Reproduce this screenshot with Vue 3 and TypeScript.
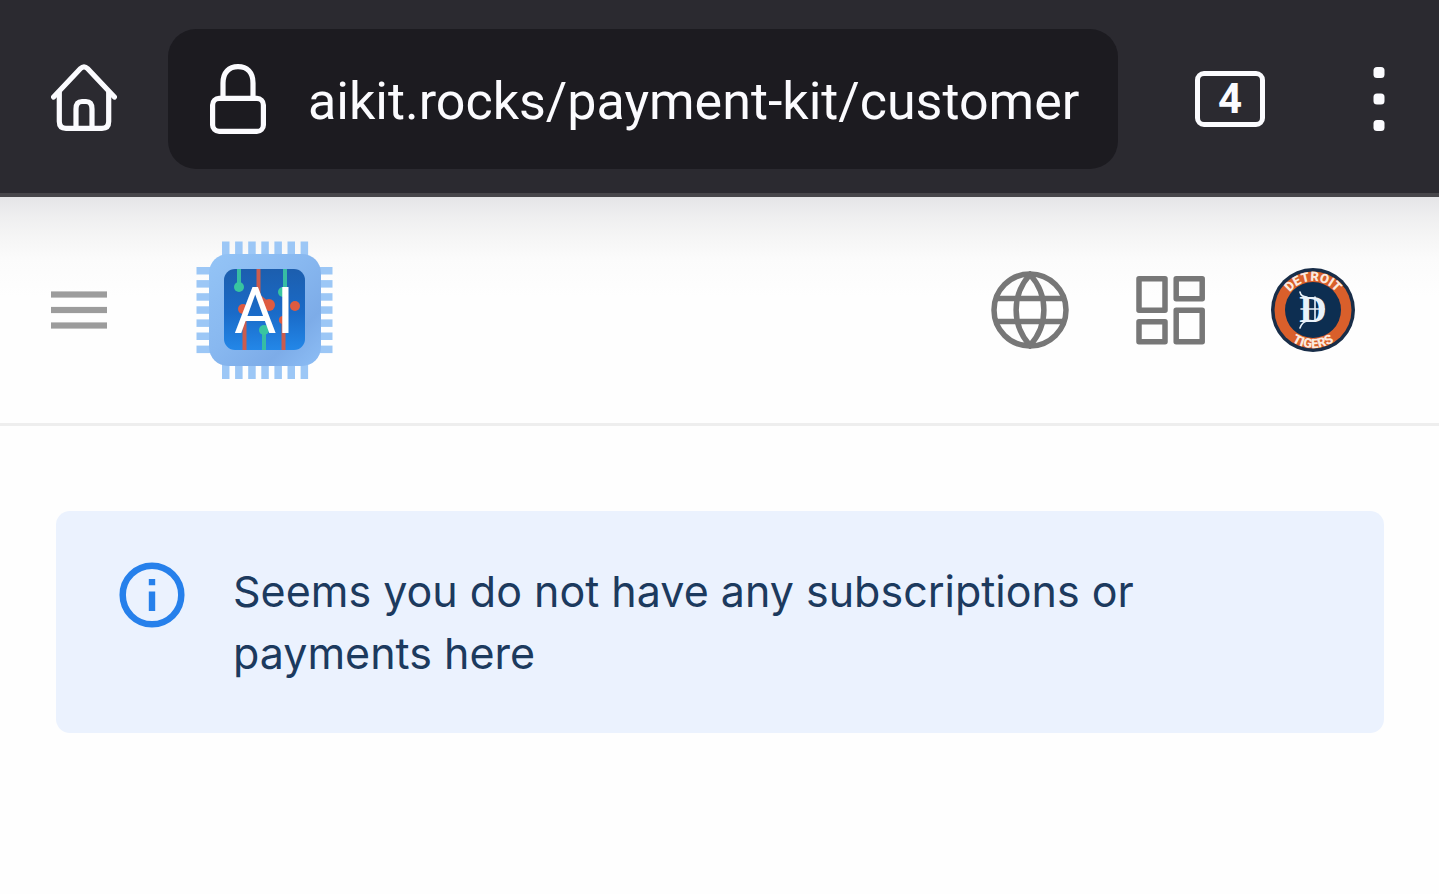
<script setup lang="ts">
import { ref } from 'vue'

const address = ref('aikit.rocks/payment-kit/customer')
const openTabs = ref(4)
const message = 'Seems you do not have any subscriptions or payments here'
const pins: number[] = [0, 1, 2, 3, 4, 5, 6]
</script>

<template>
  <div class="screen">
    <div class="browser-bar">
      <button class="icon-button" type="button" aria-label="Home">
        <svg width="66" height="70" viewBox="0 0 66 70" fill="none" stroke="currentColor" stroke-width="5.200" stroke-linecap="round" stroke-linejoin="round">
          <path d="M2.600 33 L29.5 4.500 Q33 1 36.500 4.500 L63.400 33" />
          <path d="M8.300 28 V57.500 Q8.300 64.300 15 64.300 H51 Q57.700 64.300 57.700 57.500 V28" />
          <path d="M25 63 V45 Q25 37.500 31 37.500 H35 Q41 37.500 41 45 V63" />
        </svg>
      </button>
      <label class="address">
        <svg width="56" height="70" viewBox="0 0 56 70" fill="none" stroke="currentColor" stroke-width="5.200">
          <rect x="2.600" y="34.400" width="50.800" height="33" rx="6.500" />
          <path d="M13 34 V19 C13 8.500 19 2.600 28 2.600 S43 8.500 43 19 V34" />
        </svg>
        <input v-model="address" class="address-input" type="text" aria-label="Address" />
      </label>
      <button class="tabs" type="button" aria-label="Open tabs">{{ openTabs }}</button>
      <button class="icon-button" type="button" aria-label="Browser menu">
        <svg width="12" height="64" viewBox="0 0 12 64" fill="currentColor">
          <rect x="0.500" y="0" width="11" height="11" rx="3.500" />
          <rect x="0.500" y="26.500" width="11" height="11" rx="3.500" />
          <rect x="0.500" y="53" width="11" height="11" rx="3.500" />
        </svg>
      </button>
    </div>

    <header class="site-header">
      <button class="icon-button menu" type="button" aria-label="Menu">
        <svg width="56" height="38" viewBox="0 0 56 38" fill="currentColor">
          <rect y="0.400" width="56" height="6.200" />
          <rect y="15.900" width="56" height="6.200" />
          <rect y="31.400" width="56" height="6.200" />
        </svg>
      </button>
      <a class="logo" href="#" aria-label="AI Kit">
        <svg width="138" height="138" viewBox="0 0 138 138">
          <defs>
            <linearGradient id="chip" x1="0" y1="0" x2="1" y2="1">
              <stop offset="0" stop-color="#94c4f6" />
              <stop offset="0.450" stop-color="#88b8f0" />
              <stop offset="0.750" stop-color="#7dace8" />
              <stop offset="1" stop-color="#8dbef6" />
            </linearGradient>
            <linearGradient id="core" x1="0" y1="0" x2="0" y2="1">
              <stop offset="0" stop-color="#1c5eae" />
              <stop offset="0.550" stop-color="#1a6bc8" />
              <stop offset="1" stop-color="#2387e8" />
            </linearGradient>
          </defs>
          <g fill="#9cc7f6">
            <template v-for="pin in pins" :key="pin">
              <rect :x="26 + pin * 13.1" y="0.500" width="7.500" height="16" />
              <rect :x="26 + pin * 13.1" y="122" width="7.500" height="16" />
              <rect x="0.500" :y="26 + pin * 13.1" width="16" height="7.500" />
              <rect x="120.500" :y="26 + pin * 13.1" width="16" height="7.500" />
            </template>
          </g>
          <rect x="13" y="13" width="112" height="112" rx="19" fill="url(#chip)" />
          <rect x="28" y="28" width="81" height="81" rx="11" fill="url(#core)" />
          <g fill="none" stroke-width="4">
            <path d="M43 28 V44 M89 28 V52 M68 90 V109" stroke="#37bda3" />
            <path d="M62.500 28 V55 L74 64 M48.500 67 V109 M87.500 77 V109" stroke="#cc5c4d" />
          </g>
          <g fill="#38c5a0">
            <circle cx="43" cy="46" r="5" />
            <circle cx="87" cy="51" r="5" />
            <circle cx="68" cy="89" r="5" />
          </g>
          <g fill="#df5b40">
            <circle cx="47" cy="68" r="5" />
            <circle cx="73" cy="64" r="6" />
            <circle cx="99" cy="65" r="5" />
            <circle cx="87" cy="79" r="4" />
          </g>
          <text class="logo-text" x="38" y="92">AI</text>
        </svg>
      </a>
      <nav class="actions" aria-label="Account">
        <button class="icon-button" type="button" aria-label="Language">
          <svg width="78" height="78" viewBox="0 0 78 78" fill="none" stroke="currentColor" stroke-width="5.500">
            <circle cx="39" cy="39" r="36" />
            <path d="M6 27.500 H72 M6 50.500 H72" />
            <path d="M39 3.500 C20.500 24 20.500 54 39 74.500 C57.500 54 57.500 24 39 3.500 Z" />
          </svg>
        </button>
        <button class="icon-button" type="button" aria-label="Apps">
          <svg width="70" height="70" viewBox="0 0 70 70" fill="none" stroke="currentColor" stroke-width="5.500" stroke-linejoin="round">
            <rect x="4" y="3.700" width="26" height="31.500" />
            <rect x="41.200" y="3.700" width="26" height="20" />
            <rect x="4" y="46.700" width="26" height="20" />
            <rect x="41.200" y="35.200" width="26" height="31.500" />
          </svg>
        </button>
        <button class="icon-button" type="button" aria-label="Profile">
          <svg width="84" height="84" viewBox="0 0 84 84">
            <defs>
              <path id="arc-top" d="M13 42 A29 29 0 0 1 71 42" />
              <path id="arc-bottom" d="M4 42 A38 38 0 0 0 80 42" />
            </defs>
            <circle cx="42" cy="42" r="42" fill="#182d48" />
            <circle cx="42" cy="42" r="38.500" fill="#d95f2b" />
            <circle cx="42" cy="42" r="28" fill="#0d2e51" />
            <text class="badge-text"><textPath href="#arc-top" startOffset="50%" text-anchor="middle">DETROIT</textPath></text>
            <text class="badge-text"><textPath href="#arc-bottom" startOffset="50%" text-anchor="middle">TIGERS</textPath></text>
            <text class="badge-letter" x="42" y="54" text-anchor="middle">D</text>
            <g fill="none" stroke="#e9f2fa" stroke-width="1.600" stroke-linecap="round">
              <path d="M29 24 Q30 29 36 29 M29 60 Q31 54 36 53" />
              <path d="M44 29 V53 M30 41 H53" />
            </g>
          </svg>
        </button>
      </nav>
    </header>

    <main class="content">
      <div class="alert" role="alert">
        <svg class="alert-icon" width="66" height="66" viewBox="0 0 66 66">
          <circle cx="33" cy="33" r="29.300" fill="none" stroke="currentColor" stroke-width="6.500" />
          <path d="M29.800 17 H36.200 V23.200 H29.800 Z M29.800 29.500 H36.200 V49 H29.800 Z" fill="currentColor" />
        </svg>
        <p class="alert-message">{{ message }}</p>
      </div>
    </main>
  </div>
</template>

<style>
body {
  margin: 0;
  background: #fefefe;
}
</style>

<style scoped>
.screen {
  min-height: 100vh;
  background: #fefefe;
}

.browser-bar {
  display: flex;
  align-items: center;
  box-sizing: border-box;
  height: 197px;
  padding: 5px 54px 0 51px;
  border-bottom: 4px solid #47464a;
  background: #2b2a30;
  color: #fbfbfe;
}

.icon-button {
  display: flex;
  flex: none;
  padding: 0;
  border: 0;
  background: none;
  color: inherit;
  cursor: pointer;
}

.address {
  display: flex;
  flex: 1;
  align-items: center;
  gap: 42px;
  min-width: 0;
  height: 140px;
  box-sizing: border-box;
  margin: 0 77px 0 51px;
  padding: 0 32px 0 42px;
  border-radius: 28px;
  background: #1c1b20;
}

.address svg {
  flex: none;
}

.address-input {
  flex: 1;
  min-width: 0;
  height: 80px;
  padding: 4px 0 0;
  border: 0;
  outline: 0;
  background: none;
  color: #fbfbfe;
  font: 400 52px Roboto, sans-serif;
}

.tabs {
  flex: none;
  box-sizing: border-box;
  width: 70px;
  height: 56px;
  margin-right: 108px;
  padding: 0;
  border: 5px solid #fbfbfe;
  border-radius: 9px;
  background: none;
  color: #fbfbfe;
  font: 700 42px/46px Roboto, sans-serif;
}

.site-header {
  display: flex;
  align-items: center;
  box-sizing: border-box;
  height: 229px;
  padding: 0 84px 0 51px;
  border-bottom: 3px solid #eeeeee;
  background: linear-gradient(#e5e5e7 0, #eeeeef 18px, #f6f6f6 42px, #fbfbfb 62px, #fefefe 100px);
  color: #777777;
}

.menu {
  color: #9c9c9c;
}

.logo {
  display: flex;
  margin-left: 89px;
}

.logo-text {
  fill: #ffffff;
  font: 400 65px Roboto, sans-serif;
}

.actions {
  display: flex;
  align-items: center;
  gap: 66px;
  margin-left: auto;
}

.badge-text {
  fill: #fbe9df;
  font: 900 13px Roboto, sans-serif;
}

.badge-letter {
  fill: #e9f2fa;
  font: 700 38px "Liberation Serif", serif;
}

.content {
  padding: 85px 55px 0 56px;
}

.alert {
  display: flex;
  align-items: flex-start;
  gap: 48px;
  padding: 49px 63px;
  border-radius: 14px;
  background: #ebf2fe;
}

.alert-icon {
  flex: none;
  margin-top: 2px;
  color: #2680eb;
}

.alert-message {
  margin: 0;
  color: #1c3a5e;
  font: 400 43px/62px Inter, sans-serif;
}
</style>
